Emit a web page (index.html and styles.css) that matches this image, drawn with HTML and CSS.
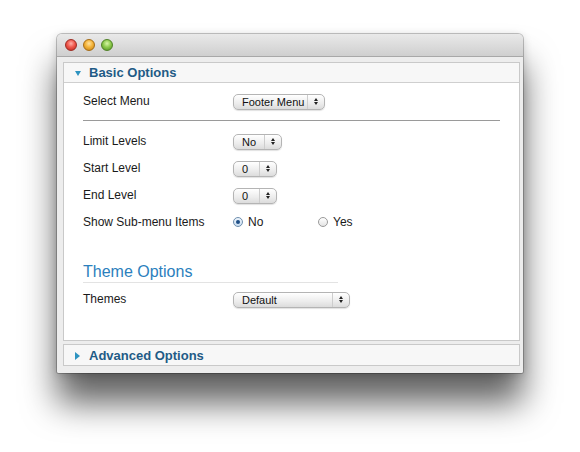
FILE: index.html
```html
<!DOCTYPE html>
<html>
<head>
<meta charset="utf-8">
<link rel="stylesheet" href="styles.css">
</head>
<body>
<div class="stage">
  <div class="window">
    <div class="titlebar">
      <span class="light red"></span>
      <span class="light yellow"></span>
      <span class="light green"></span>
    </div>
    <div class="winbody">
      <div class="panel">
        <div class="panel-head">
          <span class="tri-down"></span>
          <span class="panel-title">Basic Options</span>
        </div>
        <div class="panel-content">
          <div class="row">
            <span class="label">Select Menu</span>
            <span class="select sel-footer"><span class="sel-text">Footer Menu</span><span class="sel-arrows"><i class="up"></i><i class="down"></i></span></span>
          </div>
          <div class="sep"></div>
          <div class="row">
            <span class="label">Limit Levels</span>
            <span class="select sel-no"><span class="sel-text">No</span><span class="sel-arrows"><i class="up"></i><i class="down"></i></span></span>
          </div>
          <div class="row">
            <span class="label">Start Level</span>
            <span class="select sel-zero"><span class="sel-text">0</span><span class="sel-arrows"><i class="up"></i><i class="down"></i></span></span>
          </div>
          <div class="row">
            <span class="label">End Level</span>
            <span class="select sel-zero"><span class="sel-text">0</span><span class="sel-arrows"><i class="up"></i><i class="down"></i></span></span>
          </div>
          <div class="row">
            <span class="label">Show Sub-menu Items</span>
            <span class="radio-opt"><span class="radio checked"></span><span>No</span></span>
            <span class="radio-opt"><span class="radio"></span><span>Yes</span></span>
          </div>
          <div class="section-title">Theme Options</div>
          <div class="row row-theme">
            <span class="label">Themes</span>
            <span class="select sel-theme"><span class="sel-text">Default</span><span class="sel-arrows"><i class="up"></i><i class="down"></i></span></span>
          </div>
        </div>
      </div>
      <div class="panel panel-collapsed">
        <div class="panel-head">
          <span class="tri-right"></span>
          <span class="panel-title">Advanced Options</span>
        </div>
      </div>
    </div>
  </div>
</div>
</body>
</html>
```

FILE: styles.css
```css
html, body {
  margin: 0;
  padding: 0;
  background: #ffffff;
}
body {
  font-family: "Liberation Sans", Arial, sans-serif;
  color: #1a1a1a;
}
.stage {
  height: 452px;
  box-sizing: border-box;
  padding: 34px 0 0 57px;
}
.window {
  width: 466px;
  height: 339px;
  border-radius: 5px 5px 2px 2px;
  background: #ececec;
  box-shadow: 0 30px 34px 0 rgba(0, 0, 0, 0.62), 0 2px 10px rgba(0, 0, 0, 0.18), 0 0 0 1px rgba(0, 0, 0, 0.22);
  overflow: hidden;
  display: flex;
  flex-direction: column;
}
.titlebar {
  height: 22px;
  flex: none;
  background: linear-gradient(#e9e9e9, #cfcfcf);
  border-bottom: 1px solid #a8a8a8;
  display: flex;
  align-items: center;
  padding-left: 8px;
  gap: 6px;
}
.light {
  width: 12px;
  height: 12px;
  border-radius: 50%;
  box-sizing: border-box;
}
.red {
  background: radial-gradient(circle at 50% 35%, #ffb0a8 0, #f0594d 45%, #b8231b 100%);
  border: 1px solid #9e2a22;
}
.yellow {
  background: radial-gradient(circle at 50% 35%, #ffe2a0 0, #f4b43a 45%, #c27e12 100%);
  border: 1px solid #a56b14;
}
.green {
  background: radial-gradient(circle at 50% 35%, #d8f5a8 0, #8fcb4e 45%, #4f8f20 100%);
  border: 1px solid #4f8125;
}
.winbody {
  flex: 1;
  padding: 5px 3px 0 6px;
  display: flex;
  flex-direction: column;
  gap: 3px;
  background: #ededed;
}
.panel {
  border: 1px solid #c9c9c9;
  background: #ffffff;
}
.panel-head {
  height: 19px;
  background: #f7f7f7;
  border-bottom: 1px solid #cfcfcf;
  display: flex;
  align-items: center;
  padding-left: 11px;
}
.panel-collapsed .panel-head {
  border-bottom: none;
  height: 20px;
  padding-left: 11px;
}
.panel-title {
  font-weight: bold;
  font-size: 13px;
  color: #1f5b86;
  margin-left: 8px;
}
.panel-collapsed .panel-title {
  margin-left: 9px;
}
.tri-down {
  width: 0;
  height: 0;
  border-left: 3.5px solid transparent;
  border-right: 3.5px solid transparent;
  border-top: 5px solid #2d93c0;
  margin-top: 2px;
}
.tri-right {
  width: 0;
  height: 0;
  border-top: 4px solid transparent;
  border-bottom: 4px solid transparent;
  border-left: 5px solid #2d93c0;
  margin-top: 1px;
}
.panel-content {
  padding: 4px 19px 28px 19px;
}
.row {
  height: 27px;
  display: flex;
  align-items: center;
  font-size: 12px;
}
.label {
  width: 150px;
  flex: none;
}
.sep {
  height: 1px;
  background: #9a9a9a;
  margin: 6px 0 6px 0;
}
.select {
  display: flex;
  align-items: stretch;
  height: 16px;
  box-sizing: border-box;
  border: 1px solid #b4b4b4;
  border-radius: 5px;
  background: linear-gradient(#ffffff, #ececec 60%, #dcdcdc);
  box-shadow: 0 1px 1px rgba(0, 0, 0, 0.12);
  font-size: 11px;
  color: #111;
  margin-top: 2px;
}
.sel-text {
  flex: 1;
  padding-left: 8px;
  line-height: 14px;
  border-right: 1px solid #cdcdcd;
}
.sel-arrows {
  width: 16px;
  display: flex;
  flex-direction: column;
  align-items: center;
  justify-content: center;
  gap: 1px;
}
.sel-arrows i {
  display: block;
  width: 0;
  height: 0;
  border-left: 2.5px solid transparent;
  border-right: 2.5px solid transparent;
}
.sel-arrows .up {
  border-bottom: 3.5px solid #222;
}
.sel-arrows .down {
  border-top: 3.5px solid #222;
}
.sel-footer { width: 92px; }
.sel-no { width: 49px; }
.sel-zero { width: 44px; }
.sel-theme { width: 117px; }
.radio-opt {
  width: 85px;
  display: flex;
  align-items: center;
  gap: 5px;
  font-size: 12px;
}
.radio {
  width: 10px;
  height: 10px;
  box-sizing: border-box;
  border-radius: 50%;
  border: 1px solid #9a9a9a;
  background: linear-gradient(#ffffff, #e4e4e4);
  display: flex;
  align-items: center;
  justify-content: center;
}
.radio.checked {
  border-color: #6f8fae;
  background: linear-gradient(#eef5fc, #c9ddf0);
}
.radio.checked::after {
  content: "";
  width: 4px;
  height: 4px;
  border-radius: 50%;
  background: #1f4f86;
}
.section-title {
  margin-top: 27px;
  width: 255px;
  font-size: 16px;
  line-height: 20px;
  color: #2b80bd;
  border-bottom: 1px solid #e3e3e3;
}
.row-theme {
  margin-top: 2px;
}
```
